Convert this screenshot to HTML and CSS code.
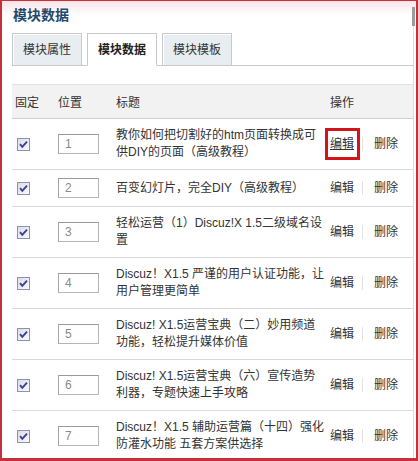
FILE: index.html
```html
<!DOCTYPE html>
<html lang="zh-CN">
<head>
<meta charset="utf-8">
<title>模块数据</title>
<link rel="stylesheet" href="styles.css">
</head>
<body>
<div class="frame">
  <h2 class="title">模块数据</h2>
  <div class="body">
    <ul class="tabs">
      <li class="tab">模块属性</li>
      <li class="tab active">模块数据</li>
      <li class="tab">模块模板</li>
    </ul>
    <table class="blocks">
      <colgroup>
        <col class="c-fix"><col class="c-pos"><col class="c-title"><col class="c-op">
      </colgroup>
      <thead>
        <tr><th>固定</th><th>位置</th><th>标题</th><th>操作</th></tr>
      </thead>
      <tbody>
        <tr>
          <td class="fix"><span class="chk"><svg viewBox="0 0 13 13" width="13" height="13"><defs><linearGradient id="g1" x1="0" y1="0" x2="1" y2="1"><stop offset="0" stop-color="#d9dce6"/><stop offset="1" stop-color="#fbfbfd"/></linearGradient></defs><rect x="0.5" y="0.5" width="12" height="12" fill="url(#g1)" stroke="#8794b3"/><path d="M3 6.2 L5.3 8.8 L10 3.6" fill="none" stroke="#3d3f96" stroke-width="1.9"/></svg></span></td>
          <td><input class="pos" type="text" value="1" readonly></td>
          <td class="ttl">教你如何把切割好的htm页面转换成可<br>供DIY的页面（高级教程）</td>
          <td class="op"><a class="lnk hot" href="#">编辑</a><span class="sep"></span><a class="lnk" href="#">删除</a></td>
        </tr>
        <tr>
          <td class="fix"><span class="chk"><svg viewBox="0 0 13 13" width="13" height="13"><rect x="0.5" y="0.5" width="12" height="12" fill="url(#g1)" stroke="#8794b3"/><path d="M3 6.2 L5.3 8.8 L10 3.6" fill="none" stroke="#3d3f96" stroke-width="1.9"/></svg></span></td>
          <td><input class="pos" type="text" value="2" readonly></td>
          <td class="ttl">百变幻灯片，完全DIY（高级教程）</td>
          <td class="op"><a class="lnk" href="#">编辑</a><span class="sep"></span><a class="lnk" href="#">删除</a></td>
        </tr>
        <tr>
          <td class="fix"><span class="chk"><svg viewBox="0 0 13 13" width="13" height="13"><rect x="0.5" y="0.5" width="12" height="12" fill="url(#g1)" stroke="#8794b3"/><path d="M3 6.2 L5.3 8.8 L10 3.6" fill="none" stroke="#3d3f96" stroke-width="1.9"/></svg></span></td>
          <td><input class="pos" type="text" value="3" readonly></td>
          <td class="ttl">轻松运营（1）Discuz!X 1.5二级域名设<br>置</td>
          <td class="op"><a class="lnk" href="#">编辑</a><span class="sep"></span><a class="lnk" href="#">删除</a></td>
        </tr>
        <tr>
          <td class="fix"><span class="chk"><svg viewBox="0 0 13 13" width="13" height="13"><rect x="0.5" y="0.5" width="12" height="12" fill="url(#g1)" stroke="#8794b3"/><path d="M3 6.2 L5.3 8.8 L10 3.6" fill="none" stroke="#3d3f96" stroke-width="1.9"/></svg></span></td>
          <td><input class="pos" type="text" value="4" readonly></td>
          <td class="ttl">Discuz！X1.5 严谨的用户认证功能，让<br>用户管理更简单</td>
          <td class="op"><a class="lnk" href="#">编辑</a><span class="sep"></span><a class="lnk" href="#">删除</a></td>
        </tr>
        <tr>
          <td class="fix"><span class="chk"><svg viewBox="0 0 13 13" width="13" height="13"><rect x="0.5" y="0.5" width="12" height="12" fill="url(#g1)" stroke="#8794b3"/><path d="M3 6.2 L5.3 8.8 L10 3.6" fill="none" stroke="#3d3f96" stroke-width="1.9"/></svg></span></td>
          <td><input class="pos" type="text" value="5" readonly></td>
          <td class="ttl">Discuz! X1.5运营宝典（二）妙用频道<br>功能，轻松提升媒体价值</td>
          <td class="op"><a class="lnk" href="#">编辑</a><span class="sep"></span><a class="lnk" href="#">删除</a></td>
        </tr>
        <tr>
          <td class="fix"><span class="chk"><svg viewBox="0 0 13 13" width="13" height="13"><rect x="0.5" y="0.5" width="12" height="12" fill="url(#g1)" stroke="#8794b3"/><path d="M3 6.2 L5.3 8.8 L10 3.6" fill="none" stroke="#3d3f96" stroke-width="1.9"/></svg></span></td>
          <td><input class="pos" type="text" value="6" readonly></td>
          <td class="ttl">Discuz! X1.5运营宝典（六）宣传造势<br>利器，专题快速上手攻略</td>
          <td class="op"><a class="lnk" href="#">编辑</a><span class="sep"></span><a class="lnk" href="#">删除</a></td>
        </tr>
        <tr>
          <td class="fix"><span class="chk"><svg viewBox="0 0 13 13" width="13" height="13"><rect x="0.5" y="0.5" width="12" height="12" fill="url(#g1)" stroke="#8794b3"/><path d="M3 6.2 L5.3 8.8 L10 3.6" fill="none" stroke="#3d3f96" stroke-width="1.9"/></svg></span></td>
          <td><input class="pos" type="text" value="7" readonly></td>
          <td class="ttl">Discuz！X1.5 辅助运营篇（十四）强化<br>防灌水功能 五套方案供选择</td>
          <td class="op"><a class="lnk" href="#">编辑</a><span class="sep"></span><a class="lnk" href="#">删除</a></td>
        </tr>
      </tbody>
    </table>
  </div>
  <span class="thumb"></span>
</div>
</body>
</html>
```
FILE: styles.css
```css
html, body {
  margin: 0;
  padding: 0;
  background: #fff;
}
body {
  font: 12px "Liberation Sans", "Noto Sans CJK SC", sans-serif;
  color: #333;
}
.frame {
  position: relative;
  width: 418px;
  height: 461px;
  box-sizing: border-box;
  overflow: hidden;
  border-style: solid;
  border-color: #c3323a;
  border-width: 1px 2px 3px 2px;
  background: linear-gradient(#fbe3e7 0, #fff 14px);
}
.title {
  margin: 0;
  padding: 4px 0 0 11px;
  height: 20px;
  line-height: 20px;
  font-size: 14px;
  font-weight: bold;
  color: #1f4a6d;
}
.body {
  width: 412px;
  box-sizing: border-box;
  padding: 8px 0 0 10px;
  border-right: 1px solid #dcdcdc;
  height: 440px;
}
.tabs {
  list-style: none;
  margin: 0;
  padding: 0;
  display: flex;
  gap: 5px;
  border-bottom: 1px solid #c9c9c9;
  height: 32px;
}
.tab {
  height: 33px;
  box-sizing: border-box;
  padding: 0 10px;
  line-height: 33px;
  border: 1px solid #c9c9c9;
  background: #e8edf1;
  box-shadow: inset 1px 1px 0 #fff;
  color: #333;
}
.tab.active {
  background: #fff;
  border-bottom-color: #fff;
  font-weight: bold;
  color: #222;
  box-shadow: none;
}
.blocks {
  margin-top: 18px;
  width: 401px;
  table-layout: fixed;
  border-collapse: collapse;
}
.c-fix { width: 43px; }
.c-pos { width: 58px; }
.c-title { width: 214px; }
.c-op { width: 86px; }
.blocks th {
  height: 33px;
  padding: 0 0 0 3px;
  text-align: left;
  font-weight: normal;
  color: #333;
  background: #f2f2f2;
  border-top: 1px solid #e2e2e2;
  border-bottom: 1px solid #cfcfcf;
}
.blocks td {
  padding: 8px 0 8px 3px;
  line-height: 17px;
  vertical-align: middle;
  border-bottom: 1px solid #d9d9d9;
}
.blocks td.fix {
  padding-left: 5px;
}
.chk {
  display: block;
  width: 13px;
  height: 13px;
}
.chk svg {
  display: block;
}
.pos {
  display: block;
  width: 41px;
  height: 20px;
  box-sizing: border-box;
  margin: 0;
  padding: 0 0 0 6px;
  border: 1px solid #b5b5b5;
  border-top-color: #9a9a9a;
  border-left-color: #a5a5a5;
  font: 12px "Liberation Sans", "Noto Sans CJK SC", sans-serif;
  color: #8a8a8a;
  background: #fff;
  outline: none;
}
.ttl {
  white-space: nowrap;
  color: #333;
}
.op {
  white-space: nowrap;
}
.lnk {
  color: #333;
  text-decoration: none;
}
.lnk.hot {
  position: relative;
  text-decoration: underline;
}
.lnk.hot::after {
  content: "";
  position: absolute;
  left: -5px;
  right: -6px;
  top: -9px;
  bottom: -9px;
  border: 3px solid #d3141b;
}
.sep {
  display: inline-block;
  width: 1px;
  height: 14px;
  background: #e2e2e2;
  vertical-align: middle;
  margin: 0 11px 0 8px;
}
.thumb {
  position: absolute;
  right: 1px;
  top: 6px;
  width: 3px;
  height: 19px;
  background: #9c9c9c;
}
```
